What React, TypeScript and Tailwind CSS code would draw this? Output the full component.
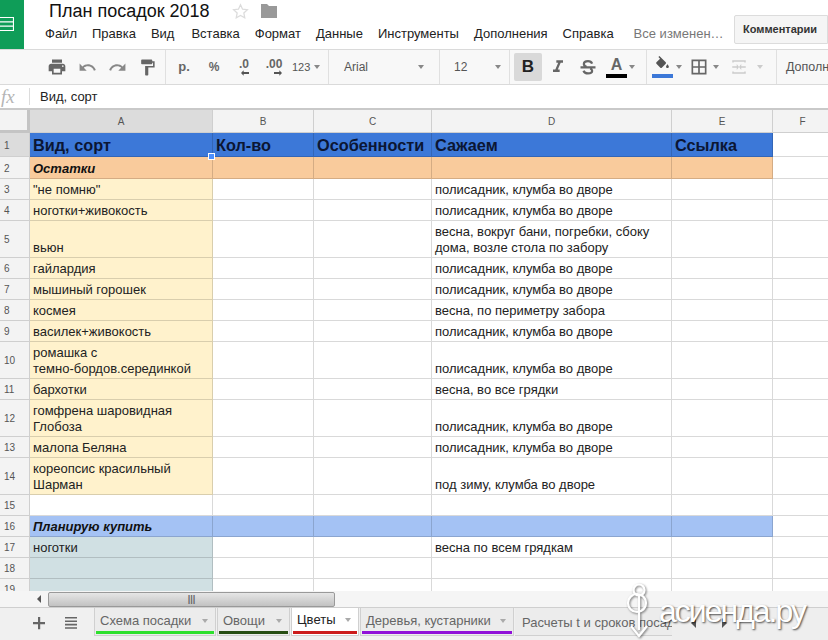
import type { ReactNode } from 'react';

const COLS = [183, 101, 118, 240, 101, 60];
const COL_W = ['w-[183px]', 'w-[101px]', 'w-[118px]', 'w-[240px]', 'w-[101px]', 'w-[60px]'];
const COL_NAMES = ['A', 'B', 'C', 'D', 'E', 'F'];

const MENU = ['Файл', 'Правка', 'Вид', 'Вставка', 'Формат', 'Данные', 'Инструменты', 'Дополнения', 'Справка'];
const BED = 'полисадник, клумба во дворе';

type Row = { h: string; a?: string; d?: string; fill?: string };

const ROWS: Row[] = [
  { h: 'h-[21px]', a: '"не помню"', d: BED, fill: 'bg-[#fff2cc]' },
  { h: 'h-[21px]', a: 'ноготки+живокость', d: BED, fill: 'bg-[#fff2cc]' },
  { h: 'h-[37px]', a: 'вьюн', d: 'весна, вокруг бани, погребки, сбоку\nдома, возле стола по забору', fill: 'bg-[#fff2cc]' },
  { h: 'h-[21px]', a: 'гайлардия', d: BED, fill: 'bg-[#fff2cc]' },
  { h: 'h-[21px]', a: 'мышиный горошек', d: BED, fill: 'bg-[#fff2cc]' },
  { h: 'h-[21px]', a: 'космея', d: 'весна, по периметру забора', fill: 'bg-[#fff2cc]' },
  { h: 'h-[21px]', a: 'василек+живокость', d: BED, fill: 'bg-[#fff2cc]' },
  { h: 'h-[37px]', a: 'ромашка с\nтемно-бордов.серединкой', d: BED, fill: 'bg-[#fff2cc]' },
  { h: 'h-[21px]', a: 'бархотки', d: 'весна, во все грядки', fill: 'bg-[#fff2cc]' },
  { h: 'h-[37px]', a: 'гомфрена шаровидная\nГлобоза', d: BED, fill: 'bg-[#fff2cc]' },
  { h: 'h-[21px]', a: 'малопа Беляна', d: BED, fill: 'bg-[#fff2cc]' },
  { h: 'h-[37px]', a: 'кореопсис красильный\nШарман', d: 'под зиму, клумба во дворе', fill: 'bg-[#fff2cc]' },
  { h: 'h-[21px]' },
];

const TABS = [
  { name: 'Схема посадки', w: 'w-[122px]', bar: 'bg-[#2ee02e]' },
  { name: 'Овощи', w: 'w-[73px]', bar: 'bg-[#274e13]' },
  { name: 'Цветы', w: 'w-[68px]', bar: 'bg-[#cc1c1c]', active: true },
  { name: 'Деревья, кустарники', w: 'w-[154px]', bar: 'bg-[#9010d8]' },
];

function Caret({ className = '' }: { className?: string }) {
  return <span className={`h-0 w-0 shrink-0 border-x-[3.5px] border-t-[4px] border-x-transparent border-t-[#888] ${className}`} />;
}

function Icon({ d, size = 20, color = '#666' }: { d: string; size?: number; color?: string }) {
  return (
    <svg width={size} height={size} viewBox="0 0 24 24" fill={color} className="shrink-0">
      <path d={d} />
    </svg>
  );
}

function Slot({ children }: { children: ReactNode }) {
  return <div className="flex h-full w-[30px] shrink-0 items-center justify-center">{children}</div>;
}

function Divider() {
  return <div className="h-full w-px shrink-0 bg-[#e0e0e0]" />;
}

function Header() {
  return (
    <div className="flex h-[49px] shrink-0 bg-white">
      <div className="flex h-full w-[24px] items-center overflow-hidden bg-[#0f9d58]">
        <svg width="14" height="16" viewBox="0 0 14 16" fill="none" stroke="#fff" strokeWidth="1.2" className="mt-[-1px]">
          <path d="M-1 1.5H13.5V14.5H-1M-1 5.8H13.5M-1 10.2H13.5" />
        </svg>
      </div>
      <div className="flex flex-1 flex-col pl-[21px]">
        <div className="flex h-[21px] items-center pl-[4px] pt-[1px]">
          <span className="text-[18px] leading-none text-[#111]">План посадок 2018</span>
          <svg width="17" height="17" viewBox="0 0 24 24" fill="none" stroke="#dcdcdc" strokeWidth="1.8" className="ml-[22px]">
            <path d="M12 2.5l2.9 6.2 6.8.8-5 4.6 1.3 6.7-6-3.3-6 3.3 1.3-6.7-5-4.6 6.8-.8z" />
          </svg>
          <svg width="18" height="16" viewBox="0 0 18 16" fill="#999" className="ml-[11px]">
            <path d="M1 1h6l2 2h8v12H1z" />
          </svg>
        </div>
        <div className="mt-[5px] flex items-center gap-[15px] text-[13px] leading-[16px] text-[#222]">
          {MENU.map((item) => (
            <span key={item} className={item === 'Вставка' ? 'ml-[2px]' : ''}>
              {item}
            </span>
          ))}
          <span className="ml-[5px] text-[#777]">Все изменен…</span>
        </div>
      </div>
      <div className="pt-[15px]">
        <div className="flex h-[29px] w-[94px] items-center rounded-l-[2px] border border-[#dcdcdc] bg-[#f5f5f5] pl-[8px] text-[11px] font-bold text-[#333]">
          Комментарии
        </div>
      </div>
    </div>
  );
}

function Toolbar() {
  return (
    <div className="flex h-[36px] shrink-0 items-center overflow-hidden border-y border-[#dadada] bg-[#f8f8f8] text-[#666]">
      <div className="flex h-full shrink-0 pl-[42px] pr-[3px]">
        <Slot>
          <Icon d="M19 8H5c-1.66 0-3 1.34-3 3v6h4v4h12v-4h4v-6c0-1.66-1.34-3-3-3zm-3 11H8v-5h8v5zm3-7c-.55 0-1-.45-1-1s.45-1 1-1 1 .45 1 1-.45 1-1 1zm-1-9H6v4h12V3z" />
        </Slot>
        <Slot>
          <Icon d="M12.5 8c-2.65 0-5.05.99-6.9 2.6L2 7v9h9l-3.62-3.62c1.39-1.16 3.16-1.88 5.12-1.88 3.54 0 6.55 2.31 7.6 5.5l2.37-.78C21.08 11.03 17.15 8 12.5 8z" size={19} color="#888" />
        </Slot>
        <Slot>
          <Icon d="M18.4 10.6C16.55 8.99 14.15 8 11.5 8c-4.65 0-8.58 3.03-9.96 7.22L3.9 16c1.05-3.19 4.05-5.5 7.6-5.5 1.95 0 3.73.72 5.12 1.88L13 16h9V7l-3.6 3.6z" size={19} color="#888" />
        </Slot>
        <Slot>
          <Icon d="M18 4V3c0-.55-.45-1-1-1H5c-.55 0-1 .45-1 1v4c0 .55.45 1 1 1h12c.55 0 1-.45 1-1V6h1v4H9v11c0 .55.45 1 1 1h2c.55 0 1-.45 1-1v-9h8V4h-3z" size={19} />
        </Slot>
      </div>
      <Divider />
      <div className="flex h-full shrink-0 pl-[3px] text-[12px]">
        <Slot><span className="text-[13px] font-bold">р.</span></Slot>
        <Slot><span className="font-bold">%</span></Slot>
        <Slot>
          <span className="flex flex-col items-center text-[12px] font-bold leading-[11px]">
            .0
            <svg width="8" height="6" viewBox="0 0 9 6" fill="#555" className="self-end"><path d="M0 3l3-3v2h6v2H3v2z" /></svg>
          </span>
        </Slot>
        <Slot>
          <span className="flex flex-col items-center text-[12px] font-bold leading-[11px]">
            .00
            <svg width="8" height="6" viewBox="0 0 9 6" fill="#555" className="self-end"><path d="M9 3L6 0v2H0v2h6v2z" /></svg>
          </span>
        </Slot>
      </div>
      <div className="flex h-full w-[39px] shrink-0 items-center gap-[4px] pl-[3px] text-[11px] text-[#555]">
        123 <Caret />
      </div>
      <Divider />
      <div className="flex h-full w-[110px] shrink-0 items-center justify-between px-[15px] text-[12px] text-[#555]">
        <span>Arial</span>
        <Caret />
      </div>
      <Divider />
      <div className="flex h-full w-[69px] shrink-0 items-center justify-between pl-[14px] pr-[8px] text-[12px] text-[#555]">
        <span>12</span>
        <Caret />
      </div>
      <Divider />
      <div className="flex h-full w-[136px] shrink-0 items-center pl-[4px]">
        <div className="flex h-[28px] w-[28px] shrink-0 items-center justify-center rounded-[2px] bg-[#d9d9d9] text-[17px] font-bold text-[#222]">B</div>
        <div className="ml-[1px]">
          <Slot>
            <Icon d="M10 4v3h2.21l-3.42 8H6v3h8v-3h-2.21l3.42-8H18V4z" size={20} />
          </Slot>
        </div>
        <Slot>
          <svg width="18" height="18" viewBox="0 0 24 24" fill="none" stroke="#666" strokeWidth="3" className="shrink-0">
            <path d="M17.5 7.5C16.5 5 14.5 4 12 4 8.8 4 6.5 5.5 6.5 8c0 2 1.5 3 3.5 3.700M15 14c1.500.7 2.500 1.500 2.500 3 0 2-2.300 3.500-5.500 3.500-2.800 0-5-1-6-3.500M2 12.500h20" />
          </svg>
        </Slot>
        <div className="ml-[3px] flex h-full w-[21px] shrink-0 flex-col items-center justify-center">
          <span className="text-[16px] font-bold leading-[16px] text-[#666]">A</span>
          <span className="mt-[1px] h-[4px] w-[21px] shrink-0 bg-black" />
        </div>
        <Caret className="ml-[2px]" />
      </div>
      <Divider />
      <div className="flex h-full w-[129px] shrink-0 items-center pl-[5px]">
        <div className="flex h-full w-[21px] shrink-0 flex-col items-center justify-center">
          <Icon d="M16.56 8.94L7.62 0 6.21 1.41l2.38 2.38-5.15 5.15c-.59.59-.59 1.54 0 2.12l5.5 5.5c.29.29.68.44 1.06.44s.77-.15 1.06-.44l5.5-5.5c.59-.58.59-1.53 0-2.12zM19 11.5s-2 2.17-2 3.5c0 1.1.9 2 2 2s2-.9 2-2c0-1.33-2-3.5-2-3.5z" size={17} color="#555" />
          <span className="mt-[1px] h-[4px] w-[21px] shrink-0 bg-[#3c78d8]" />
        </div>
        <Caret className="ml-[3px]" />
        <div className="ml-[7px]">
          <Icon d="M3 3v18h18V3H3zm8 16H5v-6h6v6zm0-8H5V5h6v6zm8 8h-6v-6h6v6zm0-8h-6V5h6v6z" size={20} color="#666" />
        </div>
        <Caret className="ml-[4px]" />
        <div className="ml-[11px]">
          <Icon d="M3 3h18v3h-2V5H5v1H3zM3 18h2v1h14v-1h2v3H3zM3 11h6V8l3 4-3 4v-3H3zM21 11h-6V8l-3 4 3 4v-3h6z" size={18} color="#ccc" />
        </div>
        <Caret className="ml-[9px] border-t-[#ccc]" />
      </div>
      <Divider />
      <div className="flex h-full shrink-0 items-center pl-[9px] text-[12.5px] whitespace-nowrap text-[#555]">
        Дополнительно
      </div>
    </div>
  );
}

function FormulaBar() {
  return (
    <div className="flex h-[25px] shrink-0 items-center border-b-2 border-[#c9c9c9] bg-white">
      <span className="w-[29px] pl-px font-['Liberation_Serif',serif] text-[19px] italic leading-none text-[#b5b5b5]">fx</span>
      <div className="h-[17px] w-px bg-[#dcdcdc]" />
      <span className="pl-[10px] text-[13px] text-[#222]">Вид, сорт</span>
    </div>
  );
}

function RowHead({ n, h, active }: { n: number; h: string; active?: boolean }) {
  return (
    <div className={`flex w-[30px] shrink-0 items-center border-b border-r border-[#cfcfcf] pl-[4px] pt-[2px] text-[10px] text-[#555] ${h} ${active ? 'bg-[#dcdcdc]' : 'bg-[#f3f3f3]'}`}>
      {n}
    </div>
  );
}

function Cell({ i, fill, className = '', children }: { i: number; fill?: string; className?: string; children?: ReactNode }) {
  return (
    <div className={`flex h-full shrink-0 items-end overflow-hidden whitespace-pre-line border-b border-r border-black/15 px-[3px] pb-[1px] ${COL_W[i]} ${fill ?? ''} ${className}`}>
      {children}
    </div>
  );
}

function Sheet() {
  return (
    <div className="relative min-h-0 flex-1 overflow-hidden bg-white text-[13px] leading-[16px] text-[#222]">
      <div className="flex h-[23px]">
        <div className="w-[30px] shrink-0 border-b-[3px] border-r-[3px] border-[#c4c4c4] bg-[#f3f3f3]" />
        {COLS.map((_, i) => (
          <div
            key={COL_NAMES[i]}
            className={`flex shrink-0 items-center justify-center border-b border-r border-[#cfcfcf] pt-[2px] text-[10px] text-[#555] ${COL_W[i]} ${i === 0 ? 'bg-[#dcdcdc]' : 'bg-[#f3f3f3]'}`}
          >
            {COL_NAMES[i]}
          </div>
        ))}
      </div>

      <div className="flex h-[24px]">
        <RowHead n={1} h="h-[24px]" active />
        {['Вид, сорт', 'Кол-во', 'Особенности', 'Сажаем', 'Ссылка'].map((title, i) => (
          <Cell key={title} i={i} fill="bg-[#3c78d8]" className="items-center pb-[3px] text-[16.3px] font-bold text-[#0b1633]">
            {title}
          </Cell>
        ))}
        <Cell i={5} />
      </div>

      <div className="flex h-[22px]">
        <RowHead n={2} h="h-[22px]" />
        {[0, 1, 2, 3, 4].map((i) => (
          <Cell key={i} i={i} fill="bg-[#f9cb9c]" className="font-bold italic text-[#111]">
            {i === 0 ? 'Остатки' : null}
          </Cell>
        ))}
        <Cell i={5} />
      </div>

      {ROWS.map((row, idx) => (
        <div key={idx} className={`flex ${row.h}`}>
          <RowHead n={idx + 3} h={row.h} />
          <Cell i={0} fill={row.fill}>{row.a}</Cell>
          <Cell i={1} />
          <Cell i={2} />
          <Cell i={3}>{row.d}</Cell>
          <Cell i={4} />
          <Cell i={5} />
        </div>
      ))}

      <div className="flex h-[21px]">
        <RowHead n={16} h="h-[21px]" />
        {[0, 1, 2, 3, 4].map((i) => (
          <Cell key={i} i={i} fill="bg-[#a4c2f4]" className="font-bold italic text-[#111]">
            {i === 0 ? 'Планирую купить' : null}
          </Cell>
        ))}
        <Cell i={5} />
      </div>

      {[
        { n: 17, a: 'ноготки', d: 'весна по всем грядкам' },
        { n: 18 },
        { n: 19 },
      ].map((row) => (
        <div key={row.n} className="flex h-[21px]">
          <RowHead n={row.n} h="h-[21px]" />
          <Cell i={0} fill="bg-[#d0e0e3]">{row.a}</Cell>
          <Cell i={1} />
          <Cell i={2} />
          <Cell i={3}>{row.d}</Cell>
          <Cell i={4} />
          <Cell i={5} />
        </div>
      ))}

      <span className="absolute left-[208px] top-[43px] h-[7px] w-[7px] border border-white bg-[#4d90fe]" />
    </div>
  );
}

function ScrollBar() {
  return (
    <div className="flex h-[16px] shrink-0 items-center bg-[#f5f5f5]">
      <div className="w-[30px] shrink-0" />
      <div className="flex w-[18px] justify-center">
        <span className="h-0 w-0 border-y-[4px] border-r-[4px] border-y-transparent border-r-[#555]" />
      </div>
      <div className="flex h-[15px] w-[287px] items-center justify-center rounded-[2px] border border-[#999] bg-gradient-to-b from-[#e6e6e6] to-[#c2c2c2] text-[9px] font-bold leading-none text-[#666]">
        |||
      </div>
    </div>
  );
}

function TabBar() {
  return (
    <div className="flex h-[33px] shrink-0 items-start border-t border-[#cfcfcf] bg-[#f0f0f0]">
      <div className="flex h-full w-[94px] shrink-0 items-center pb-[3px] pl-[32px]">
        <svg width="14" height="14" viewBox="0 0 14 14" fill="#666"><path d="M6 1h2.2v5H13v2.2H8.2v5H6v-5H1V6h5z" /></svg>
        <svg width="14" height="12" viewBox="0 0 14 12" fill="#666" className="ml-[18px]"><path d="M1 0h12v1.6H1zM1 3.4h12V5H1zM1 6.8h12v1.6H1zM1 10.2h12v1.6H1z" /></svg>
      </div>
      {TABS.map((tab) => (
        <div
          key={tab.name}
          className={`mr-[1px] flex h-[28px] shrink-0 flex-col border-x border-b border-[#d0d0d0] ${tab.w} ${tab.active ? 'bg-white text-[#222]' : 'bg-[#ececec] text-[#666]'}`}
        >
          <div className={`flex flex-1 items-center justify-between pl-[5px] pr-[7px] text-[13px] ${tab.active ? '' : 'pt-[2px]'}`}>
            <span className="whitespace-nowrap">{tab.name}</span>
            <Caret className="border-t-[#aaa]" />
          </div>
          <div className={`mx-px mb-px h-[3px] shrink-0 ${tab.bar}`} />
        </div>
      ))}
      <div className="flex h-[28px] w-[157px] shrink-0 items-center overflow-hidden border-b border-[#d0d0d0] bg-[#ececec] pl-[7px] pt-[2px] text-[13px] whitespace-nowrap text-[#666]">
        Расчеты t и сроков посадки
      </div>
      <div className="flex h-full flex-1 items-center gap-[26px] bg-[#eeeeee] pb-[2px] pl-[19px]">
        <span className="h-0 w-0 border-y-[5px] border-r-[5px] border-y-transparent border-r-[#555]" />
        <span className="h-0 w-0 border-y-[5px] border-l-[5px] border-y-transparent border-l-[#555]" />
      </div>
    </div>
  );
}

function Watermark() {
  return (
    <div className="pointer-events-none absolute bottom-0 left-[624px] flex h-[58px] items-start">
      <svg width="30" height="58" viewBox="0 0 30 58" fill="none" stroke="#fff" strokeWidth="2.2" className="drop-shadow-[1px_1px_1px_rgba(0,0,0,0.5)]">
        <circle cx="15" cy="8" r="5.5" />
        <circle cx="13" cy="21" r="9" />
        <path d="M15 14v34M7 44l8 10 8-10" />
      </svg>
      <span className="ml-[5px] mt-[10px] text-[32px] leading-[38px] tracking-[-2px] text-white [text-shadow:1px_1px_2px_rgba(0,0,0,0.7)]">
        асиенда.ру
      </span>
    </div>
  );
}

export default function App() {
  return (
    <div className="relative flex h-[640px] w-[828px] flex-col overflow-hidden bg-white font-['Liberation_Sans',Arial,sans-serif]">
      <Header />
      <Toolbar />
      <FormulaBar />
      <Sheet />
      <ScrollBar />
      <TabBar />
      <Watermark />
    </div>
  );
}
